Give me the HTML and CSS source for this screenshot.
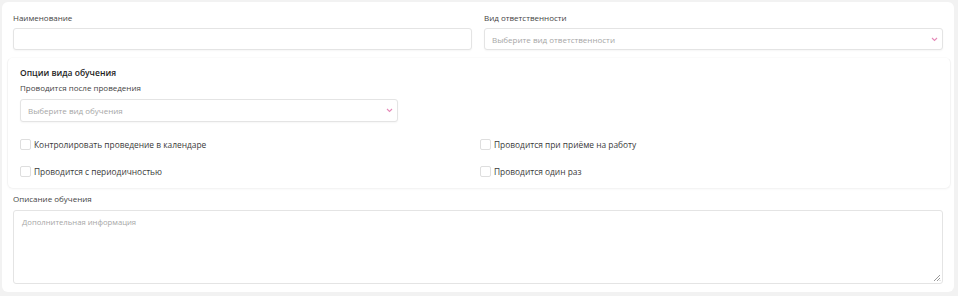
FILE: index.html
```html
<!DOCTYPE html>
<html lang="ru">
<head>
<meta charset="utf-8">
<link rel="stylesheet" href="styles.css">
</head>
<body>
<div class="card">
  <div class="row2">
    <div class="field">
      <div class="label">Наименование</div>
      <div class="input"></div>
    </div>
    <div class="field">
      <div class="label">Вид ответственности</div>
      <div class="input select">
        <span class="ph">Выберите вид ответственности</span>
        <svg class="chev" width="7" height="5" viewBox="0 0 7 5"><path d="M1 1 L3.5 3.5 L6 1" fill="none" stroke="#e58ab8" stroke-width="1.1"/></svg>
      </div>
    </div>
  </div>

  <div class="options">
    <div class="title">Опции вида обучения</div>
    <div class="label">Проводится после проведения</div>
    <div class="input select short">
      <span class="ph">Выберите вид обучения</span>
      <svg class="chev" width="7" height="5" viewBox="0 0 7 5"><path d="M1 1 L3.5 3.5 L6 1" fill="none" stroke="#e58ab8" stroke-width="1.1"/></svg>
    </div>
    <div class="checks">
      <label class="check"><span class="box"></span><span>Контролировать проведение в календаре</span></label>
      <label class="check"><span class="box"></span><span>Проводится при приёме на работу</span></label>
      <label class="check"><span class="box"></span><span>Проводится с периодичностью</span></label>
      <label class="check"><span class="box"></span><span>Проводится один раз</span></label>
    </div>
  </div>

  <div class="label desc-label">Описание обучения</div>
  <div class="textarea">
    <span class="ph ta-ph">Дополнительная информация</span>
    <svg class="grip" width="8" height="8" viewBox="0 0 8 8"><path d="M7 1 L1 7 M7 4 L4 7 M7 6.5 L6.5 7" stroke="#999" stroke-width="1"/></svg>
  </div>
</div>
</body>
</html>
```

FILE: styles.css
```css
* { box-sizing: border-box; }
html, body { margin: 0; padding: 0; }
body {
  background: #f2f2f2;
  padding: 2px 4px 4px 2px;
  font-family: "Open Sans", "Noto Sans", sans-serif;
  font-size: 8px;
  color: #3a3a3a;
  width: 958px;
  height: 296px;
}
.card {
  background: #fff;
  border-radius: 6px;
  padding: 10px 11px 10px 11px;
  height: 290px;
}
.row2 {
  display: grid;
  grid-template-columns: 1fr 1fr;
  column-gap: 12px;
}
.label {
  height: 12px;
  line-height: 12px;
  margin-bottom: 4px;
  color: #444;
  font-size: 8px;
}
.input {
  height: 22px;
  border: 1px solid #e4e4e4;
  border-radius: 3px;
  background: #fff;
  box-shadow: 0 1px 2px rgba(0,0,0,0.04);
}
.select {
  display: flex;
  align-items: center;
  justify-content: space-between;
  padding: 0 4px 0 7px;
}
.ph { color: #a6a6a6; font-size: 8px; }
.chev { display: block; }
.options {
  margin: 7px -8px 0 -6px;
  padding: 9px 12px 9px 12px;
  border: 1px solid #f4f4f4;
  border-top-color: #fbfbfb;
  border-radius: 6px;
  box-shadow: 0 1px 2px rgba(0,0,0,0.025);
}
.title {
  font-weight: 600;
  font-size: 8.5px;
  color: #1e1e1e;
  height: 12px;
  line-height: 12px;
  margin-bottom: 3px;
}
.options .label { margin-bottom: 5px; }
.short { width: 378px; height: 23px; }
.checks {
  display: grid;
  grid-template-columns: 448px 1fr;
  column-gap: 12px;
  row-gap: 11px;
  margin-top: 14px;
}
.check {
  display: flex;
  align-items: center;
  gap: 3px;
  height: 16px;
  color: #3a3a3a;
  font-size: 8.4px;
}
.box {
  width: 11px;
  height: 11px;
  border: 1px solid #dedede;
  border-radius: 2px;
  background: #fff;
  flex: none;
}
.desc-label { margin-top: 4px; margin-bottom: 5px; }
.textarea {
  position: relative;
  height: 74px;
  border: 1px solid #e4e4e4;
  border-radius: 3px;
  padding: 5px 8px;
}
.ta-ph { font-size: 7.7px; }
.grip { position: absolute; right: 1px; bottom: 1px; }
```
